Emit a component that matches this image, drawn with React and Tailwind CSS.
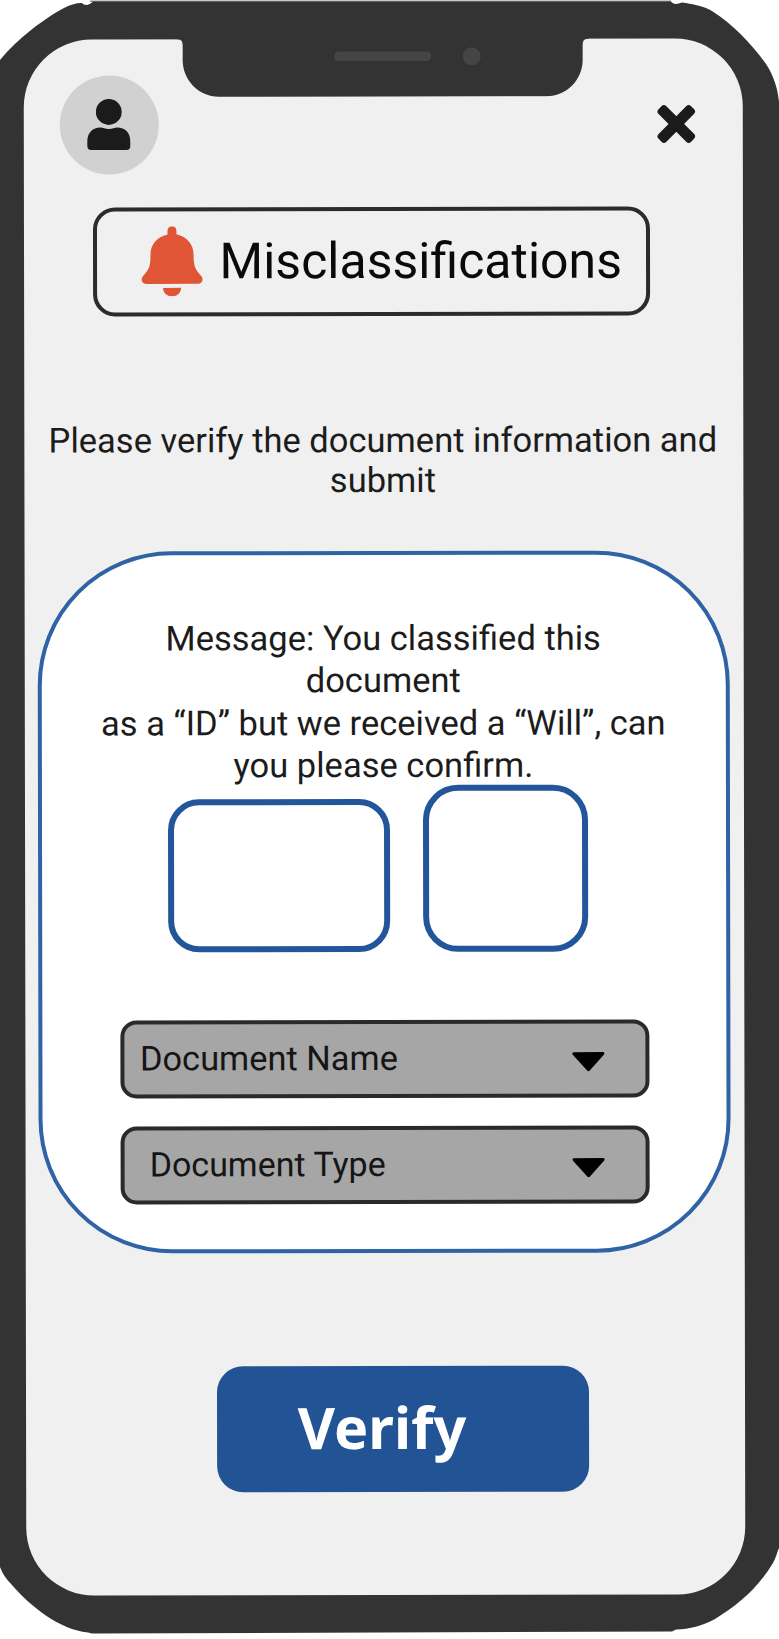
function PhoneBody() {
  return (
    <svg className="absolute inset-0" width="779" height="1639" viewBox="0 0 779 1639" aria-hidden="true">
      <path d="M90 0.500H671V2H90Z" fill="#8f8f8f" />
      <path
        fill="#333333"
        d="M0 60C18 38 45 18 65 7.500C72 4 78 2.500 82 3C84 5.500 89 6 93 1.500H671C673 4.500 677 4.500 682 2.500C692 4 704 6 712 11C734 25 754 47 766 64C774 76 778 90 779 102V1548C777 1552 776 1558 773 1563C758 1588 738 1605 715 1619C702 1626 690 1629 676 1629.500L672 1631.500L92 1633.500L88 1632.500C60 1630 30 1606 12 1585C6 1579 2 1573 0 1567Z"
      />
    </svg>
  );
}

function Notch() {
  return (
    <svg className="absolute top-[-2px] left-[152.5px]" width="412" height="60" viewBox="0 0 412 60" aria-hidden="true">
      <path fill="#333333" d="M0 0H412V2C408 2 406 3.500 406 8V23C406 43 390 59.500 370 59.500H42C22 59.500 6 43 6 23V8C6 3.500 4 2 0 2Z" />
      <rect x="157.500" y="14.500" width="97" height="9.500" rx="4.500" fill="#454545" />
      <circle cx="295" cy="19.500" r="9" fill="#454545" />
    </svg>
  );
}

function Avatar() {
  return (
    <button className="flex size-[99px] items-center justify-center rounded-full bg-[#d1d1d1] pr-[2px]" aria-label="Profile">
      <svg width="44" height="52" viewBox="0 0 44 52" fill="#1b1b1b">
        <circle cx="22" cy="13.500" r="12.900" />
        <path d="M0.500 43C0.500 34 6 29 13.500 29C16.500 29 18 30.500 22 30.500C26 30.500 27.500 29 30.500 29C38 29 43.500 34 43.500 43V47.500Q43.500 51.500 39.500 51.500H4.500Q0.500 51.500 0.500 47.500Z" />
      </svg>
    </button>
  );
}

function Select({ label, className }) {
  return (
    <button
      className={
        "flex h-[78px] w-[529px] items-center justify-between rounded-[16px] border-4 border-[#2a2a2a] bg-[#a6a6a6] pr-[40px] text-[#151515] " +
        className
      }
    >
      <span className="pb-[2px]">{label}</span>
      <svg className="mt-[5px]" width="34" height="20" viewBox="0 0 34 20">
        <path d="M2.500 2H31.500L17 18Z" fill="#000" stroke="#000" strokeWidth="3" strokeLinejoin="round" />
      </svg>
    </button>
  );
}

export default function App() {
  return (
    <div className="relative h-[1639px] w-[779px] overflow-hidden bg-white pt-[38.7px] pl-[24.5px] font-['Roboto',sans-serif]">
      <PhoneBody />
      <main className="relative flex h-[1556.3px] w-[719px] rotate-[-0.1deg] flex-col rounded-[68px] bg-[#f0f0f0] pt-[35.5px]">
        <Notch />
        <header className="flex items-center justify-between pr-[47px] pl-[36px]">
          <Avatar />
          <button aria-label="Close">
            <svg width="39" height="39" viewBox="0 0 39 39" fill="#1b1b1b">
              <rect x="-3.500" y="14" width="46" height="11" rx="3.500" transform="rotate(45 19.5 19.5)" />
              <rect x="-3.500" y="14" width="46" height="11" rx="3.500" transform="rotate(-45 19.5 19.5)" />
            </svg>
          </button>
        </header>

        <div className="mt-[33px] ml-[69px] flex h-[109px] w-[557px] items-center rounded-[22px] border-4 border-[#2b2b2b] pl-[43.5px]">
          <svg className="shrink-0" width="62" height="70" viewBox="0 0 62 70" fill="#e05536">
            <path d="M31 0C34 0 35.500 2 35.500 5V8C46 10.500 52.500 18 52.500 28C52.500 40 54 43 60 49.500C63 53 61 57.500 57 57.500H5C1 57.500 -1 53 2 49.500C8 43 9.500 40 9.500 28C9.500 18 16 10.500 26.500 8V5C26.500 2 28 0 31 0Z" />
            <path d="M22 61.500H40C40 66.500 36 70 31 70C26 70 22 66.500 22 61.500Z" />
          </svg>
          <h1 className="ml-[17px] text-[50px] leading-[58px] whitespace-nowrap text-[#0a0a0a]">Misclassifications</h1>
        </div>

        <p className="mt-[104px] pr-[2px] text-center text-[34.5px] leading-[40px] whitespace-nowrap text-[#1c1c1c]">
          Please verify the document information and
          <br />
          submit
        </p>

        <section className="mt-[51px] ml-[13px] flex h-[702px] w-[692px] flex-col rounded-[134px] border-4 border-[#2f63a5] bg-white pt-[62.5px]">
          <p className="pr-[1px] text-center text-[34.5px] leading-[42.4px] whitespace-nowrap text-[#1c1c1c]">
            Message: You classified this
            <br />
            document
            <br />
            as a “ID” but we received a “Will”, can
            <br />
            you please confirm.
          </p>
          <div className="mt-[-2px] flex items-end gap-[33px] pl-[125.5px]">
            <div className="h-[153px] w-[222px] rounded-[31px] border-[6px] border-[#225599]" />
            <div className="h-[167px] w-[165px] rounded-[35px] border-[6px] border-[#225599]" />
          </div>
          <div className="mt-[68.5px] flex flex-col gap-[28px] pl-[78px] leading-[40px]">
            <Select label="Document Name" className="pl-[15.5px] text-[34.4px]" />
            <Select label="Document Type" className="pl-[25px] text-[34px]" />
          </div>
        </section>

        <button className="mt-[113px] ml-[190.5px] h-[126px] w-[372px] rounded-[26px] bg-[#225495] pr-[41px] pb-[4px] font-['Noto_Sans',sans-serif] text-[57.5px] leading-[70px] font-bold text-white">
          Verify
        </button>
      </main>
    </div>
  );
}
